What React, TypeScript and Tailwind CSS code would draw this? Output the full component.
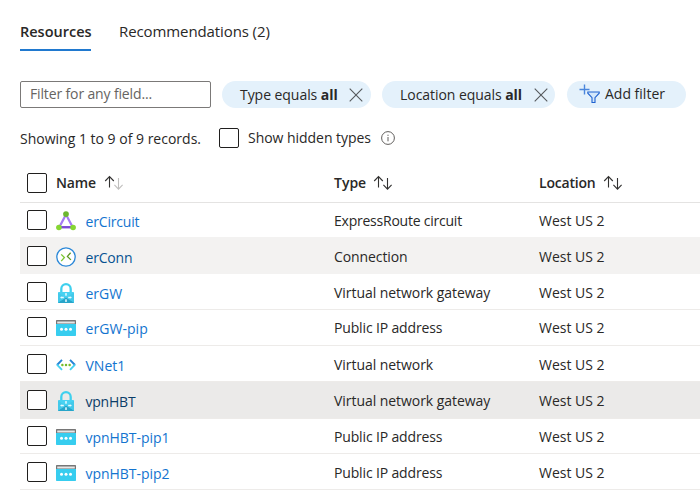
import type { ReactNode } from "react";

function Checkbox() {
  return <span className="box-border block h-5 w-5 shrink-0 rounded-[2px] border border-[#201f1e] bg-white" />;
}

function SortArrows({ ascending = false }: { ascending?: boolean }) {
  return (
    <svg width="20" height="16" viewBox="0 0 20 16" fill="none" strokeWidth="1.1">
      <path d="M5.5 12.5V1.6M1.2 6l4.3-4.4L9.8 6" stroke="#323130" />
      <path d="M14.5 3v11M10.4 9.8l4.1 4.3 4.1-4.3" stroke={ascending ? "#c0bfbe" : "#323130"} />
    </svg>
  );
}

function CloseIcon() {
  return (
    <svg width="14" height="14" viewBox="0 0 14 14" fill="none" stroke="#55595d" strokeWidth="1.1">
      <path d="M.7.7l12.6 12.6M13.3.7L.7 13.3" />
    </svg>
  );
}

function AddFilterIcon() {
  return (
    <svg width="21" height="20" viewBox="0 0 21 20" fill="none" stroke="#1f62d0">
      <path d="M5.5.5v10M.5 5.5h10" stroke="#4a86dc" strokeWidth="1.4" />
      <path d="M8.8 8h11.4v1.2L16 13.7v4.8h-3v-4.8L8.8 9.2z" fill="#d3e7fb" strokeWidth="1.1" />
    </svg>
  );
}

function InfoIcon() {
  return (
    <svg width="14" height="14" viewBox="0 0 14 14" fill="none" stroke="#605e5c">
      <circle cx="7" cy="7" r="6.4" />
      <path d="M7 6v4.3M7 3.7v1.2" />
    </svg>
  );
}

function CircuitIcon() {
  return (
    <svg width="20" height="20" viewBox="0 0 20 20">
      <path d="M10 3.5L3.3 16.2h13.4z" fill="none" stroke="#a67af4" strokeWidth="2.2" />
      <path d="M3.3 16.2h13.4" stroke="#7d4bd6" strokeWidth="2.2" />
      <circle cx="10" cy="3.1" r="2.9" fill="#6cb72f" />
      <circle cx="2.9" cy="16.5" r="2.8" fill="#86d633" />
      <circle cx="17.1" cy="16.5" r="2.8" fill="#86d633" />
    </svg>
  );
}

function ConnectionIcon() {
  return (
    <svg width="20" height="20" viewBox="0 0 20 20" fill="none">
      <circle cx="10" cy="10" r="9.2" fill="#fff" stroke="#2b88d8" strokeWidth="1.3" />
      <path d="M5.2 7.4l3.2 3.1-3.2 3.6" stroke="#7cc832" strokeWidth="1.3" />
      <path d="M14.6 5.8l-3.2 3.6 3.5 3.5" stroke="#5e9624" strokeWidth="1.3" />
    </svg>
  );
}

function GatewayIcon() {
  return (
    <svg width="20" height="20" viewBox="0 0 20 20">
      <path d="M5.3 10V5.9a4.7 4.7 0 0 1 9.4 0V10" fill="none" stroke="#3fd0ee" strokeWidth="2.3" />
      <rect x="2" y="9" width="16" height="11" rx=".8" fill="#48d2f2" />
      <path d="M2 19.4L10 14.5l8 4.9c0 .4-.3.6-.8.6H2.8c-.5 0-.8-.2-.8-.6z" fill="#28a5c9" />
      <path d="M2 9.8l8 4.7-8 4.9zM18 9.8l-8 4.7 8 4.9z" fill="#43c9ea" />
      <path d="M10 10.2v2.6M10 16.2v2.6M4.8 14.5h3M12.2 14.5h3" stroke="#e8fbff" strokeWidth="1.4" />
      <path d="M9 11.2l1-1.3 1 1.3zM9 17.8l1 1.3 1-1.3zM5.6 13.4l-1.4 1.1 1.4 1.1zM14.4 13.4l1.4 1.1-1.4 1.1z" fill="#e8fbff" />
    </svg>
  );
}

function PublicIpIcon() {
  return (
    <svg width="20" height="16" viewBox="0 0 20 16">
      <rect x="0" y="3" width="20" height="13" rx=".7" fill="#37cdef" />
      <path d="M.6 0h18.8q.6 0 .6.6V4H0V.6Q0 0 .6 0z" fill="#767676" />
      <rect x="1.2" y="1.5" width="17.6" height="2" fill="#e6e6e6" />
      <circle cx="5.5" cy="9.3" r="1.5" fill="#fff" />
      <circle cx="10" cy="9.3" r="1.5" fill="#fff" />
      <circle cx="14.5" cy="9.3" r="1.5" fill="#fff" />
    </svg>
  );
}

function VNetIcon() {
  return (
    <svg width="20" height="12" viewBox="0 0 20 12" fill="none" strokeWidth="1.9">
      <path d="M6 .8L1 6" stroke="#2583d5" />
      <path d="M1 5.7l5 5.2" stroke="#45d1f1" />
      <path d="M14 .8L19 6" stroke="#2583d5" />
      <path d="M19 5.7l-5 5.2" stroke="#45d1f1" />
      <g fill="#76bc2d">
        <circle cx="6.4" cy="6" r="1.25" />
        <circle cx="10" cy="6" r="1.25" />
        <circle cx="13.6" cy="6" r="1.25" />
      </g>
    </svg>
  );
}

type Row = { name: string; nameClass: string; type: string; typeClass: string; icon: ReactNode; rowClass: string };

const gateway = "Virtual network gateway";
const publicIp = "Public IP address";

const rows: Row[] = [
  { name: "erCircuit", nameClass: "text-[#1374cf] tracking-[-0.17px]", type: "ExpressRoute circuit", typeClass: "tracking-[-0.23px]", icon: <CircuitIcon />, rowClass: "h-[34px] border-white" },
  { name: "erConn", nameClass: "text-[#075291] tracking-[-0.18px]", type: "Connection", typeClass: "tracking-[-0.1px]", icon: <ConnectionIcon />, rowClass: "h-[37px] bg-[#f3f2f1] border-[#f3f2f1] pt-[2px]" },
  { name: "erGW", nameClass: "text-[#1374cf]", type: gateway, typeClass: "tracking-[-0.05px]", icon: <GatewayIcon />, rowClass: "h-[36px] border-[#edebe9]" },
  { name: "erGW-pip", nameClass: "text-[#1374cf] tracking-[0.05px]", type: publicIp, typeClass: "tracking-[-0.15px]", icon: <PublicIpIcon />, rowClass: "h-[36px] border-[#edebe9] pb-[2px]" },
  { name: "VNet1", nameClass: "text-[#1374cf]", type: "Virtual network", typeClass: "tracking-[-0.05px]", icon: <VNetIcon />, rowClass: "h-[36px] border-[#edebe9]" },
  { name: "vpnHBT", nameClass: "text-[#0b3d68] tracking-[-0.22px]", type: gateway, typeClass: "tracking-[-0.05px]", icon: <GatewayIcon />, rowClass: "h-[37px] bg-[#ebeae9] border-[#edebe9]" },
  { name: "vpnHBT-pip1", nameClass: "text-[#1374cf] tracking-[-0.05px]", type: publicIp, typeClass: "tracking-[-0.15px]", icon: <PublicIpIcon />, rowClass: "h-[35px] border-[#edebe9]" },
  { name: "vpnHBT-pip2", nameClass: "text-[#1374cf] tracking-[-0.05px]", type: publicIp, typeClass: "tracking-[-0.15px]", icon: <PublicIpIcon />, rowClass: "h-[36px] border-[#edebe9]" },
];

export default function App() {
  return (
    <div className="h-[495px] w-[700px] overflow-hidden bg-white pl-5 font-['Open_Sans',sans-serif] text-[14px] leading-5 text-[#292827]">
      <nav className="flex h-[51px] items-end gap-7">
        <div className="w-[71px] border-b-2 border-[#2079cf] pb-[7px] text-[14.5px] font-semibold whitespace-nowrap">Resources</div>
        <div className="pb-[10px] text-[15px] tracking-[-0.1px] whitespace-nowrap">Recommendations (2)</div>
      </nav>

      <div className="mt-[30px] flex h-[27px] whitespace-nowrap">
        <div className="flex w-[191px] items-center rounded-[2px] border border-[#7b7978] pb-[2px] pl-[9px] tracking-[-0.14px] text-[#666462]">
          Filter for any field...
        </div>
        <div className="ml-[11px] flex w-[149px] items-center justify-between rounded-full bg-[#e4f1fb] pr-2 pl-[18px]">
          <span className="tracking-[-0.05px]">Type equals <b>all</b></span>
          <CloseIcon />
        </div>
        <div className="ml-[11px] flex w-[173px] items-center justify-between rounded-full bg-[#e4f1fb] pr-[7px] pl-[18px]">
          <span className="tracking-[-0.05px]">Location equals <b>all</b></span>
          <CloseIcon />
        </div>
        <div className="ml-3 flex w-[119px] items-center gap-[5px] rounded-full bg-[#e4f1fb] pb-[2px] pl-3">
          <AddFilterIcon />
          <span>Add filter</span>
        </div>
      </div>

      <div className="mt-5 flex h-5 items-center whitespace-nowrap">
        <span className="w-[199px] pt-[2px]">Showing 1 to 9 of 9 records.</span>
        <Checkbox />
        <span className="mr-[10px] ml-[9px] w-[123px] tracking-[-0.04px]">Show hidden types</span>
        <InfoIcon />
      </div>

      <div className="mt-[15px] grid h-10 grid-cols-[314px_205px_1fr] items-center border-b border-[#e4e3e2] pt-px font-semibold">
        <div className="flex items-center pl-[7px]">
          <Checkbox />
          <span className="mr-2 ml-[9px] w-10 tracking-[-0.15px]">Name</span>
          <SortArrows ascending />
        </div>
        <div className="flex items-center gap-2">
          <span className="w-[31px]">Type</span>
          <SortArrows />
        </div>
        <div className="flex items-center gap-2">
          <span className="w-[56px] tracking-[-0.2px]">Location</span>
          <SortArrows />
        </div>
      </div>

      {rows.map((row) => (
        <div key={row.name} className={`grid grid-cols-[314px_205px_1fr] items-center border-b whitespace-nowrap ${row.rowClass}`}>
          <div className="flex h-5 items-center pl-[7px]">
            <Checkbox />
            <span className="mr-[9.5px] ml-[9px] flex h-5 w-5 items-center pt-[2px]">{row.icon}</span>
            <span className={`pt-[4px] ${row.nameClass}`}>{row.name}</span>
          </div>
          <div className={`pt-[2px] ${row.typeClass}`}>{row.type}</div>
          <div className="pt-[2px]">West US 2</div>
        </div>
      ))}
    </div>
  );
}
